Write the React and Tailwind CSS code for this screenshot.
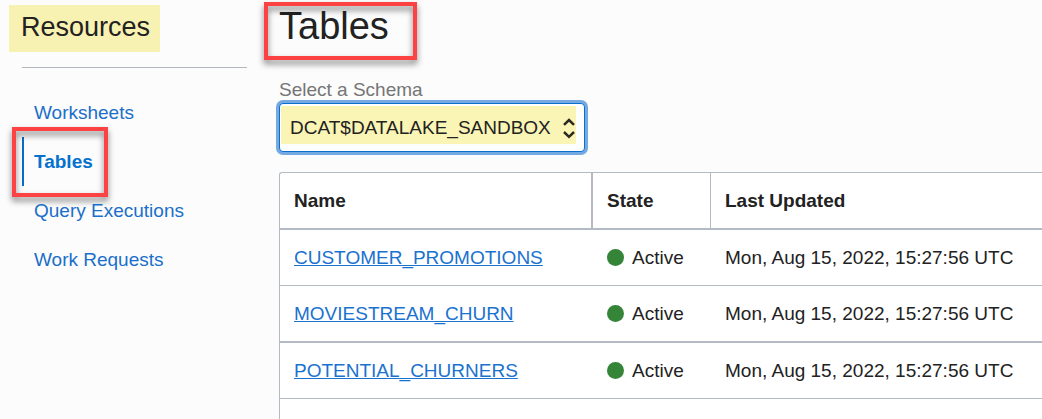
const links = ['Worksheets', 'Tables', 'Query Executions', 'Work Requests'];

const rows = [
  { name: 'CUSTOMER_PROMOTIONS', line: 'h-[56px] border-b' },
  { name: 'MOVIESTREAM_CHURN', line: 'h-[57px] border-b-2' },
  { name: 'POTENTIAL_CHURNERS', line: 'h-[56px] border-b' },
];

function Callout({ className }) {
  return (
    <span
      aria-hidden="true"
      className={`pointer-events-none absolute border-4 border-[#fc4243] drop-shadow-[0_4px_3px_rgba(0,0,0,0.5)] ${className}`}
    />
  );
}

function Sidebar() {
  return (
    <aside className="w-[247px] shrink-0 pt-[5px]">
      <h2 className="ml-[9px] h-[47px] w-[151px] bg-[#f8f2b2] pl-[12px] text-[27px] leading-[45px]">
        Resources
      </h2>
      <hr className="mt-[15px] ml-[22px] border-t border-[#b3b8bf]" />
      <nav className="mt-5 ml-[22px]" aria-label="Resources">
        <ul>
          {links.map((label) => {
            const active = label === 'Tables';
            return (
              <li key={label} className="relative">
                <a
                  href="#"
                  aria-current={active ? 'page' : undefined}
                  className={`block h-[49px] border-l-2 pl-[10px] leading-[49px] ${
                    active
                      ? 'border-[#0a6cc9] font-bold text-[#0572ce]'
                      : 'border-transparent text-[#1a6fca]'
                  }`}
                >
                  {label}
                </a>
                {active && <Callout className="-top-[10px] -left-[10px] h-[70px] w-[96px]" />}
              </li>
            );
          })}
        </ul>
      </nav>
    </aside>
  );
}

function SchemaPicker() {
  return (
    <div className="mt-[27px]">
      <label htmlFor="schema" className="block leading-[24px] text-[#757575]">
        Select a Schema
      </label>
      <div className="relative mt-[1px] w-[306px]">
        <select
          id="schema"
          className="block h-[49px] w-full appearance-none rounded-[4px] border border-[#0b6fd0] bg-white bg-[linear-gradient(#faf4b5,#faf4b5)] bg-[length:295px_38px] bg-[position:1px_2px] bg-no-repeat pr-[30px] pl-[10px] text-[#222] ring-3 ring-[#74a9e2] outline-none"
        >
          <option>DCAT$DATALAKE_SANDBOX</option>
        </select>
        <svg
          aria-hidden="true"
          viewBox="0 0 12 22"
          className="pointer-events-none absolute top-[14px] right-[10px] h-[22px] w-[12px]"
          fill="none"
          stroke="#2b2920"
          strokeWidth="2.5"
        >
          <path d="M1 7.8 L6 3 L11 7.8 M1 15 L6 19.8 L11 15" />
        </svg>
      </div>
    </div>
  );
}

function TableList() {
  const head =
    'h-[57px] border-b-2 border-[#b4bac4] px-[14px] text-left font-bold';
  return (
    <div className="mt-[20px] grow rounded-tl-[3px] border-t border-l border-[#b4bac4] bg-white pb-5">
      <table className="w-full table-fixed border-separate border-spacing-0">
        <thead>
          <tr>
            <th scope="col" className={`${head} w-[313px] border-r-2`}>Name</th>
            <th scope="col" className={`${head} w-[118px] border-r`}>State</th>
            <th scope="col" className={head}>Last Updated</th>
          </tr>
        </thead>
        <tbody>
          {rows.map((row) => {
            const cell = `${row.line} border-[#b4bac4] px-[14px] whitespace-nowrap`;
            return (
              <tr key={row.name}>
                <td className={cell}>
                  <a href="#" className="text-[#1a72cf] underline">{row.name}</a>
                </td>
                <td className={cell}>
                  <span className="flex items-center gap-2">
                    <span className="size-[17px] shrink-0 rounded-full bg-[#358539]" />
                    Active
                  </span>
                </td>
                <td className={cell}>Mon, Aug 15, 2022, 15:27:56 UTC</td>
              </tr>
            );
          })}
        </tbody>
      </table>
    </div>
  );
}

export default function App() {
  return (
    <div className="flex min-h-screen bg-[#fcfcfc] font-['Liberation_Sans',Arial,sans-serif] text-[19px] leading-[24px] text-[#222]">
      <Sidebar />
      <main className="ml-8 flex min-w-0 grow flex-col">
        <div className="relative pt-[2px]">
          <h1 className="text-[38px] leading-[49px]">Tables</h1>
          <Callout className="top-[2px] -left-[15px] h-[58px] w-[153px]" />
        </div>
        <SchemaPicker />
        <TableList />
      </main>
    </div>
  );
}
